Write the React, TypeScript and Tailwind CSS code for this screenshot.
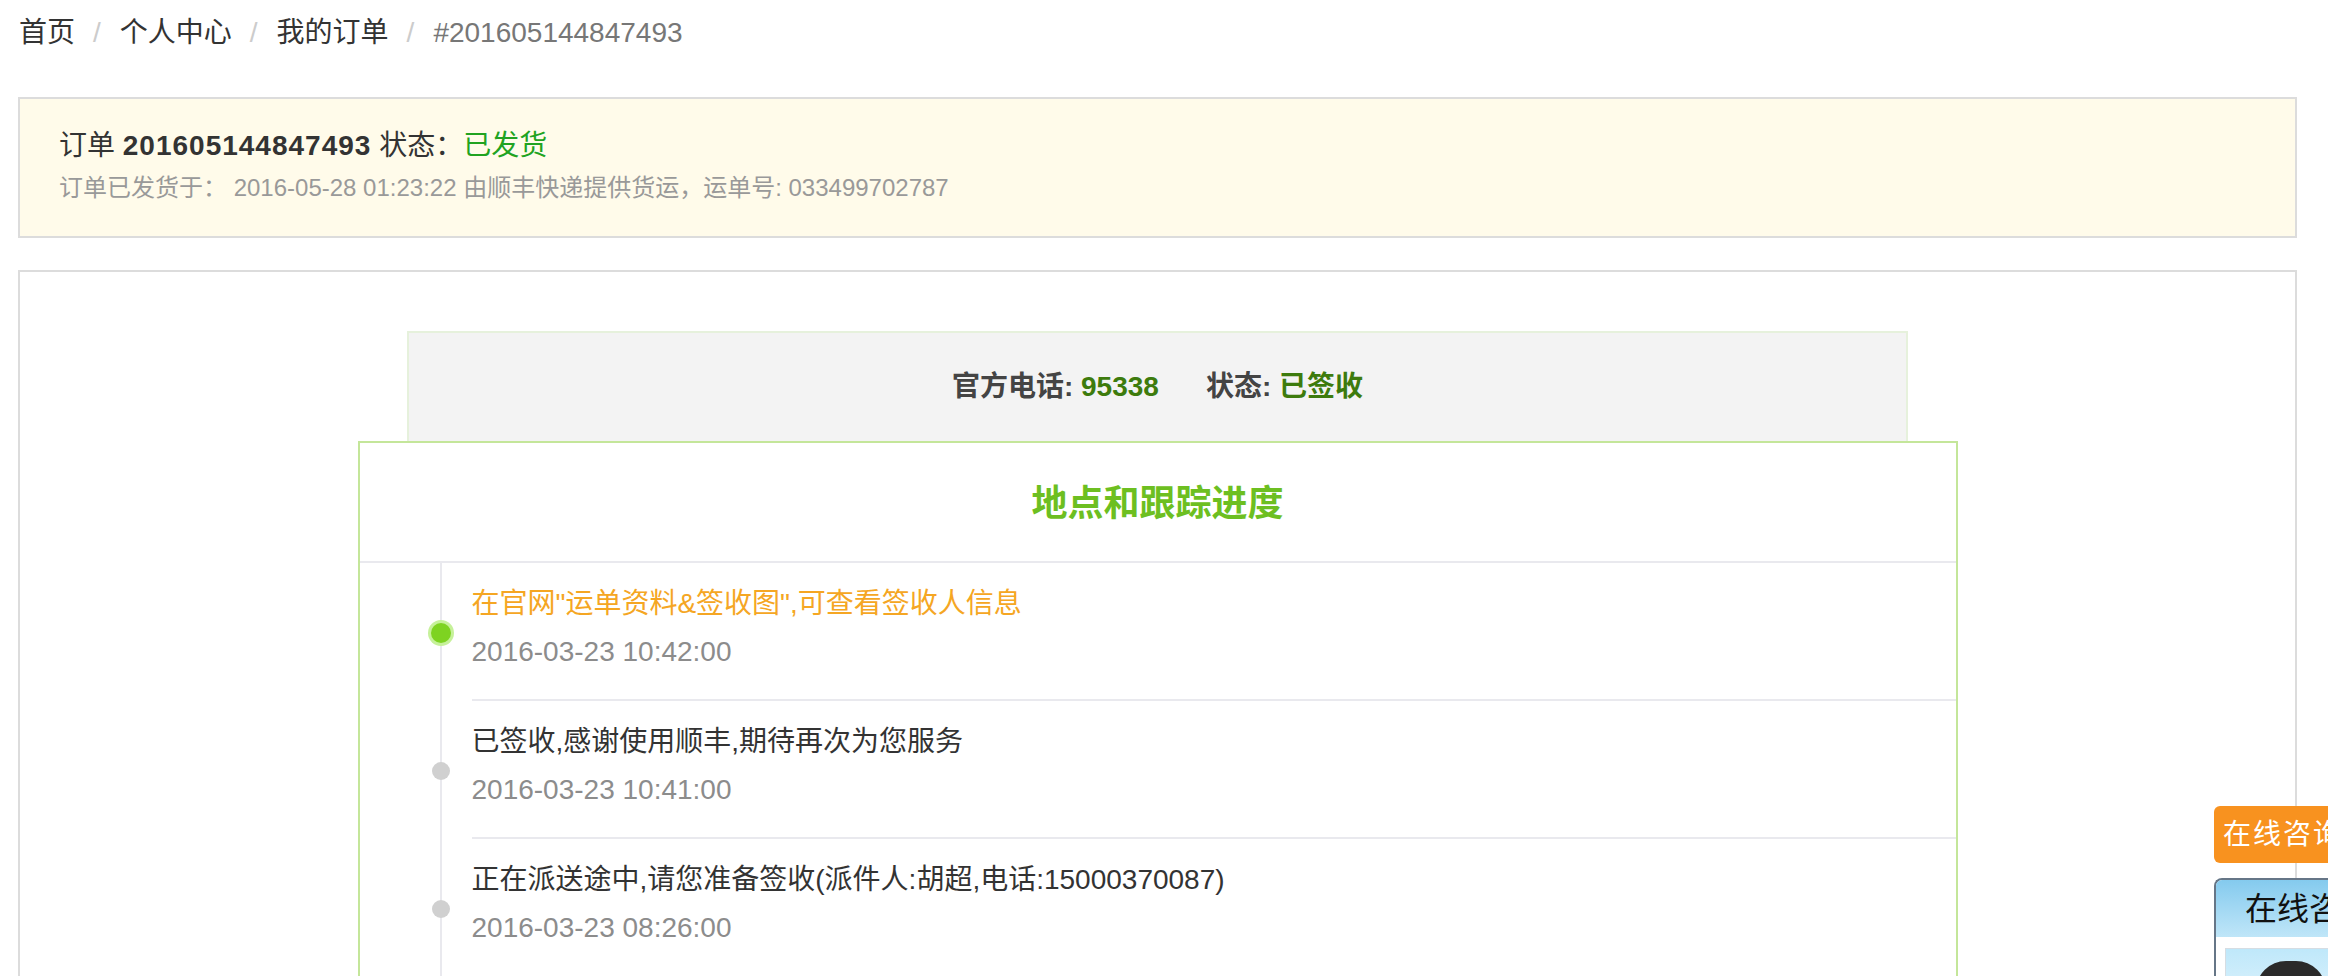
import React from 'react';

type Step = { text: string; time: string; latest?: boolean };

const steps: Step[] = [
  { text: '在官网"运单资料&签收图",可查看签收人信息', time: '2016-03-23 10:42:00', latest: true },
  { text: '已签收,感谢使用顺丰,期待再次为您服务', time: '2016-03-23 10:41:00' },
  { text: '正在派送途中,请您准备签收(派件人:胡超,电话:15000370087)', time: '2016-03-23 08:26:00' },
];

const Breadcrumb: React.FC = () => {
  const items = ['首页', '个人中心', '我的订单'];
  return (
    <div className="flex items-center pl-[19px] pt-[13px] text-[28px] leading-[40px]">
      {items.map((it) => (
        <React.Fragment key={it}>
          <span className="text-[#333]">{it}</span>
          <span className="ml-[18px] mr-[19px] text-[#ccc]">/</span>
        </React.Fragment>
      ))}
      <span className="text-[#777]">#201605144847493</span>
    </div>
  );
};

const OrderNotice: React.FC = () => (
  <div className="ml-[18px] mt-[44px] h-[141px] w-[2279px] border-2 border-[#dcdcdc] bg-[#fffbea] pl-[39px] pt-[27px]">
    <div className="text-[28px] leading-[40px] text-[#333]">
      订单 <b className="font-bold tracking-[1px]">201605144847493</b> 状态：<span className="text-[#21a321]">已发货</span>
    </div>
    <div className="mt-[5px] text-[24px] leading-[34px] text-[#999]">
      订单已发货于： 2016-05-28 01:23:22 由顺丰快递提供货运，运单号: 033499702787
    </div>
  </div>
);

const Tracking: React.FC = () => (
  <div className="ml-[18px] mt-[32px] h-[800px] w-[2279px] border-2 border-[#dcdcdc] bg-white pt-[59px]">
    <div className="mx-auto flex h-[110px] w-[1501px] items-center justify-center border-2 border-b-0 border-[#e6f1dc] bg-[#f3f3f3] text-[28px] font-bold text-[#444]">
      <span>
        官方电话: <span className="text-[#3d7b0d]">95338</span>
      </span>
      <span className="ml-[47px]">
        状态: <span className="text-[#3d7b0d]">已签收</span>
      </span>
    </div>
    <div className="mx-auto h-[600px] w-[1600px] border-2 border-[#c4e69a] bg-white">
      <div className="flex h-[120px] items-center justify-center border-b-2 border-[#e9e9ee] pt-[4px] text-[36px] font-bold text-[#6dbf21]">
        地点和跟踪进度
      </div>
      <div className="flex flex-col">
        {steps.map((s, i) => (
          <div key={s.time} className="flex">
            <div className="relative w-[112px] shrink-0">
              <div className="absolute bottom-0 left-[80px] top-0 w-[2px] bg-[#e9e9ee]" />
              {s.latest ? (
                <div className="absolute left-[81px] top-[70px] h-[20px] w-[20px] -translate-x-1/2 -translate-y-1/2 rounded-full bg-[#7ed321] ring-[3px] ring-[#c6f19a]" />
              ) : (
                <div className="absolute left-[81px] top-[70px] h-[18px] w-[18px] -translate-x-1/2 -translate-y-1/2 rounded-full bg-[#d0d0d0]" />
              )}
            </div>
            <div
              className={
                i < steps.length - 1
                  ? 'flex-1 border-b-2 border-[#e9e9ee] pb-[27px] pt-[21px] text-[28px] leading-[40px]'
                  : 'flex-1 pb-[80px] pt-[21px] text-[28px] leading-[40px]'
              }
            >
              <div className={s.latest ? 'text-[#f5a623]' : 'text-[#333]'}>{s.text}</div>
              <div className="mt-[8px] text-[#8c8c8c]">{s.time}</div>
            </div>
          </div>
        ))}
      </div>
    </div>
  </div>
);

const ChatWidget: React.FC = () => (
  <div className="absolute left-[2214px] top-[806px] w-[140px]">
    <div className="flex h-[57px] items-center rounded-l-[6px] bg-[#f8921f] pl-[9px] text-[28px] tracking-[2px] text-white whitespace-nowrap">
      在线咨询
    </div>
    <div className="mt-[15px] h-[120px] rounded-tl-[8px] border-2 border-r-0 border-[#667687] bg-white">
      <div className="flex h-[57px] items-center rounded-tl-[6px] bg-gradient-to-b from-[#84caee] to-[#bfe6f8] pl-[29px] text-[32px] text-[#111] whitespace-nowrap">
        在线咨询
      </div>
      <div className="ml-[9px] mt-[11px] h-[60px] overflow-hidden border border-[#d6dde3] bg-gradient-to-b from-[#bfe8fa] to-[#dff3fc] pl-[30px] pt-[12px]">
        <div className="h-[60px] w-[70px] rounded-full bg-[#2a2a2a]" />
      </div>
    </div>
  </div>
);

export default function App() {
  return (
    <div className="relative h-[976px] w-full overflow-hidden bg-white font-['Liberation_Sans','Noto_Sans_CJK_SC',sans-serif]">
      <Breadcrumb />
      <OrderNotice />
      <Tracking />
      <ChatWidget />
    </div>
  );
}
